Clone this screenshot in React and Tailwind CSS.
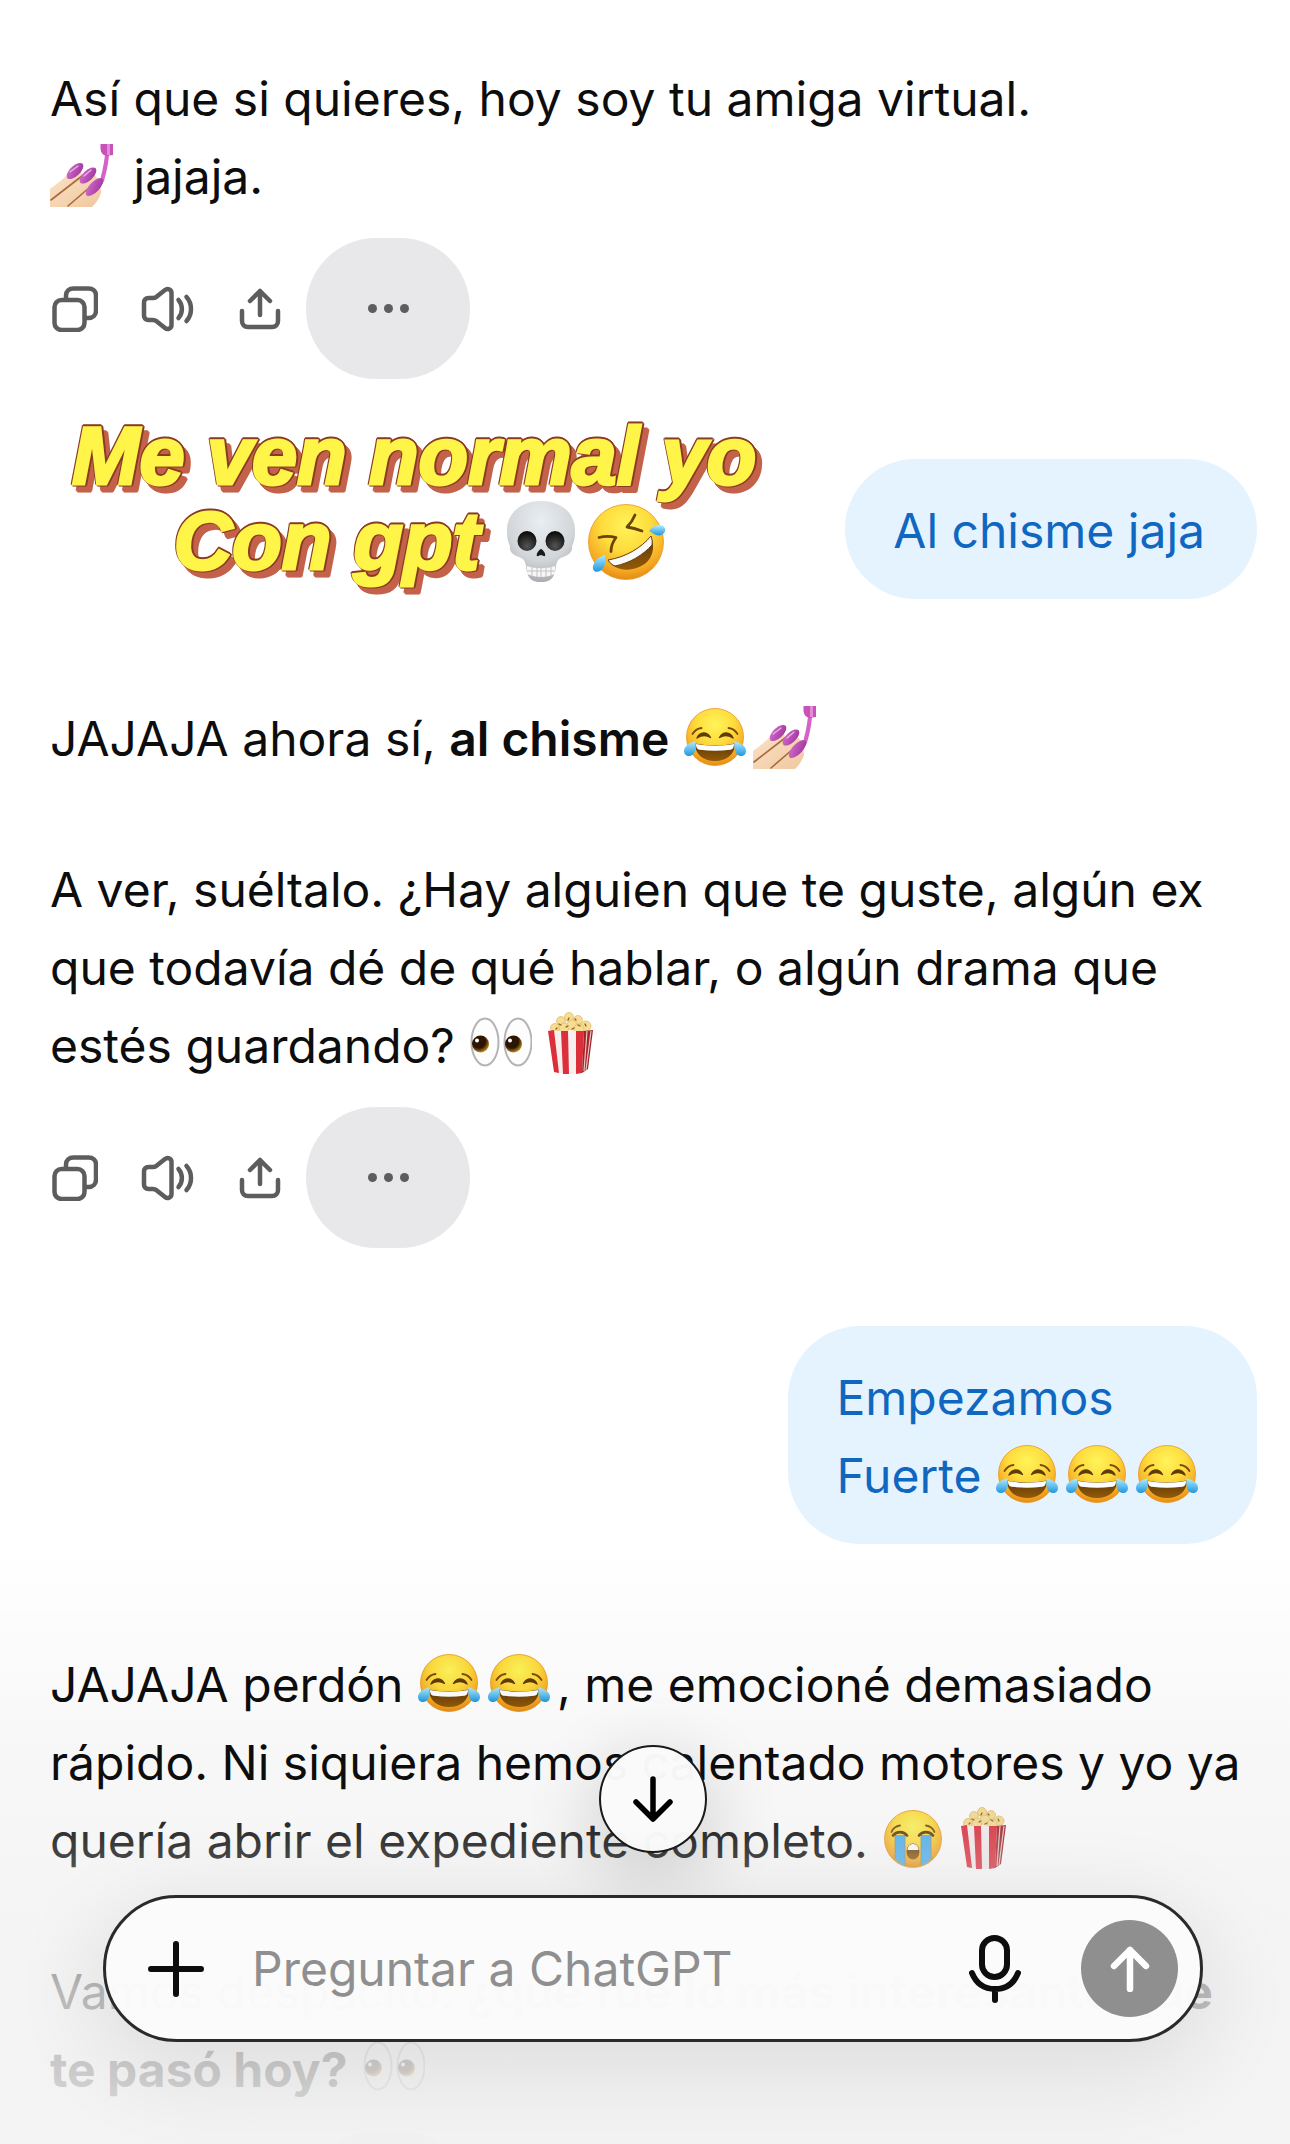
import React, { useState } from "react";

const EmojiDefs = () => (
  <svg className="absolute w-0 h-0" aria-hidden="true">
    <defs>
      <radialGradient id="face" cx="0.5" cy="0.28" r="0.75">
        <stop offset="0" stopColor="#fff45a" />
        <stop offset="0.45" stopColor="#fedb3c" />
        <stop offset="0.8" stopColor="#f6a924" />
        <stop offset="1" stopColor="#e08410" />
      </radialGradient>
      <linearGradient id="tear" x1="0" y1="0" x2="0" y2="1">
        <stop offset="0" stopColor="#aeeaff" />
        <stop offset="1" stopColor="#1f97dd" />
      </linearGradient>
      <linearGradient id="mouth" x1="0" y1="0" x2="0" y2="1">
        <stop offset="0" stopColor="#5c3806" />
        <stop offset="1" stopColor="#935a08" />
      </linearGradient>
      <linearGradient id="skin" x1="0" y1="0" x2="1" y2="1">
        <stop offset="0" stopColor="#fbe3c8" />
        <stop offset="1" stopColor="#f0c79e" />
      </linearGradient>
      <linearGradient id="nail" x1="0" y1="0" x2="1" y2="1">
        <stop offset="0" stopColor="#d56fd0" />
        <stop offset="1" stopColor="#9c3298" />
      </linearGradient>
      <radialGradient id="iris" cx="0.4" cy="0.35" r="0.65">
        <stop offset="0.6" stopColor="#2c1503" />
        <stop offset="1" stopColor="#b98a1c" />
      </radialGradient>
      <radialGradient id="bone" cx="0.5" cy="0.25" r="0.8">
        <stop offset="0" stopColor="#e9eef2" />
        <stop offset="0.6" stopColor="#d3d6d9" />
        <stop offset="1" stopColor="#a3a5a8" />
      </radialGradient>
      <radialGradient id="socket" cx="0.5" cy="0.75" r="0.7">
        <stop offset="0" stopColor="#555" />
        <stop offset="1" stopColor="#0b0b0b" />
      </radialGradient>
    </defs>
  </svg>
);

const Emoji = ({ label, children }) => (
  <svg
    role="img"
    aria-label={label}
    viewBox="0 0 64 64"
    className="inline-block w-[64px] h-[64px] mr-[6px] align-[-13px]"
  >
    {children}
  </svg>
);

const Joy = () => (
  <Emoji label="😂">
    <circle cx="32" cy="32" r="28.5" fill="url(#face)" stroke="#e8951f" strokeWidth="0.8" />
    <path d="M9.5 29c2-3.500 5-5.500 9-6M54.500 29c-2-3.500-5-5.500-9-6" fill="none" stroke="#7a4b08" strokeWidth="1.800" strokeLinecap="round" />
    <path d="M14 33c3-6.500 10-6.500 13.500-.5-4-2.500-9-2.500-13.500.5zM50 33c-3-6.500-10-6.500-13.500-.5 4-2.500 9-2.500 13.500.5z" fill="#5f3b08" stroke="#5f3b08" strokeWidth="1.400" strokeLinejoin="round" />
    <path d="M12 38.500c12 2.500 28 2.500 40 0 0 10.500-8 17.500-20 17.500s-20-7-20-17.500z" fill="url(#mouth)" />
    <path d="M13 39c12 2.300 26 2.300 38 0 0 4-1.500 5.500-4 5.800-10 1.200-20 1.200-30 0-2.500-.3-4-1.800-4-5.800z" fill="#fff" />
    <path d="M12.500 36.500C8 37 1 40.500 1 46c0 3 2.200 5 5 5 5.500 0 7.500-7 6.500-14.500z" fill="url(#tear)" />
    <path d="M51.500 36.500C56 37 63 40.500 63 46c0 3-2.200 5-5 5-5.500 0-7.500-7-6.500-14.500z" fill="url(#tear)" />
  </Emoji>
);

const Sob = () => (
  <Emoji label="😭">
    <circle cx="32" cy="32" r="28.500" fill="url(#face)" stroke="#e8951f" strokeWidth="0.8" />
    <path d="M14 28h10v31c-4-1.500-7-4-10-7zM40 28h10v24c-3 3-6 5.500-10 7z" fill="#4db1f2" />
    <path d="M14 28v24M24 28v31M40 28v31M50 28v24" stroke="#8d8f6a" strokeWidth="0.800" />
    <path d="M10.500 25c1.500-3.500 4.500-6 8.500-6.500M53.500 25c-1.500-3.500-4.500-6-8.500-6.500" fill="none" stroke="#7a4b08" strokeWidth="1.800" strokeLinecap="round" />
    <path d="M12 28.500c3.500-4.500 10.500-4.500 14 0M38 28.500c3.500-4.500 10.500-4.500 14 0" fill="none" stroke="#5f3b08" strokeWidth="2.800" strokeLinecap="round" />
    <ellipse cx="32" cy="44.500" rx="6.500" ry="8" fill="url(#mouth)" />
    <path d="M26.500 43c0-8 11-8 11 0z" fill="#fff" />
  </Emoji>
);

const NailPolish = () => (
  <Emoji label="💅🏻">
    <path d="M0 46c5-4 11-8 17-14l13-5 4 8 9-4 7 6 1 13c-2 6-5 10-9 14H0z" fill="url(#skin)" />
    <path d="M1 57l31-24M18 63l22-19" stroke="#a8693c" strokeWidth="1.600" strokeLinecap="round" />
    <path d="M55 12h4c-1 11-3 19-5 26-2 5-7 7-8 5 3-4 5-7 5-10 2-7 3-14 4-21z" fill="#d562c6" />
    <ellipse cx="25" cy="28" rx="10.500" ry="5" transform="rotate(-43 25 28)" fill="url(#nail)" />
    <ellipse cx="38" cy="32.500" rx="10.500" ry="5" transform="rotate(-43 38 32.500)" fill="url(#nail)" />
    <ellipse cx="44.500" cy="44" rx="11.500" ry="5" transform="rotate(-47 44.500 44)" fill="url(#nail)" />
    <path d="M50.500 1H63v11l-7 1c-3-1-5-3-5.500-7z" fill="#c852b8" />
    <path d="M57 1h3v11h-3z" fill="#e38ad8" />
    <path d="M20 29l8-6M34 33l7-6" stroke="#edb4ea" strokeWidth="1.200" strokeLinecap="round" />
  </Emoji>
);

const Eyes = () => (
  <Emoji label="👀">
    <ellipse cx="17" cy="30" rx="13.500" ry="23.500" fill="#fdfdfd" stroke="#b3b3b8" strokeWidth="2" />
    <ellipse cx="50" cy="30" rx="13.500" ry="23.500" fill="#fdfdfd" stroke="#b3b3b8" strokeWidth="2" />
    <circle cx="12.500" cy="32" r="8.500" fill="url(#iris)" />
    <circle cx="45.500" cy="32" r="8.500" fill="url(#iris)" />
    <circle cx="9" cy="28.500" r="2" fill="#fff" />
    <circle cx="42" cy="28.500" r="2" fill="#fff" />
  </Emoji>
);

const Popcorn = () => (
  <Emoji label="🍿">
    <g fill="#f6dd94" stroke="#dfb960" strokeWidth="0.700">
      <circle cx="17" cy="16" r="4.500" />
      <circle cx="23" cy="9" r="4.500" />
      <circle cx="31" cy="5" r="4.500" />
      <circle cx="40" cy="8" r="4.500" />
      <circle cx="48" cy="14" r="5" />
      <circle cx="26" cy="16" r="5" />
      <circle cx="34" cy="13" r="5" />
      <circle cx="41" cy="17" r="5" />
    </g>
    <path d="M21 12l2 1M30 8l1-2M37 7l1 1M28 15l2-1M40 13l2 1M18 17l1-1M34 17l2-1M47 12l1 2" stroke="#8b5c1a" strokeWidth="1.300" strokeLinecap="round" />
    <path d="M10 19h36l-1 42-10 1-18-1z" fill="#f7eeee" />
    <path d="M10 19l6-1 5 43-5-1zM23 19h7l1 43h-6zM38 19h8l-2 42-6 1z" fill="#dc2f3c" />
    <path d="M46 19l9-1-5 39-6 4z" fill="#a3232b" />
    <path d="M49 19l-3 40M53 19l-5 39" stroke="#e8c9c4" strokeWidth="1.200" />
  </Emoji>
);

const Skull = () => (
  <svg role="img" aria-label="💀" viewBox="0 0 70 84" className="w-[70px] h-[84px]">
    <path d="M35 1C15 1 1 13 1 30c0 8 1 12 3 16-1 6 3 9 9 11 5 2 6 4 7 9 1 8 2 16 15 16s14-8 15-16c1-5 2-7 7-9 6-2 10-5 9-11 2-4 3-8 3-16C69 13 55 1 35 1z" fill="url(#bone)" />
    <ellipse cx="21" cy="41" rx="9.500" ry="10" fill="url(#socket)" />
    <ellipse cx="49" cy="41" rx="9.500" ry="10" fill="url(#socket)" />
    <path d="M35 49c-3 1-5 6-4 7 1 .6 3-1 4-1s3 1.600 4 1c1-1-1-6-4-7z" fill="#1b1b1b" />
    <path d="M21 66c9 3 19 3 28 0v8c-9 4-19 4-28 0z" fill="#f7f7f7" />
    <path d="M21 71h28M26 67v9M31 68v9M35 68v9M40 68v9M45 67v9" stroke="#c2c2c2" strokeWidth="1" />
  </svg>
);

const Rofl = () => (
  <svg role="img" aria-label="🤣" viewBox="0 0 80 80" className="w-[80px] h-[80px]">
    <circle cx="39" cy="40" r="37.500" fill="url(#face)" stroke="#e8951f" strokeWidth="0.800" />
    <path d="M12 35.500c6-1.500 11-1.500 17 0-3 4-5 8-5 14M48 13c-2 5-5 9-8 12 5 .6 10 2 15 4" fill="none" stroke="#6b4208" strokeWidth="2.800" strokeLinejoin="round" strokeLinecap="round" />
    <path d="M21 58c18-3 33-12 43-24 5 13 1 26-12 31-12 5-25 3-31-7z" fill="url(#mouth)" />
    <path d="M21 58c18-3 33-12 43-24 1 3 1.500 6 1 9-9 10-22 18-37 21-3-1-5-3-7-6z" fill="#fafafa" stroke="#6b4208" strokeWidth="1" />
    <path d="M62 29c4-6 10-7 14-5 4 3 2 8-2 9-4 2-8-2-12-4z" fill="url(#tear)" />
    <path d="M18 53c-7 2-11 7-12 11-1 5 3 7 7 5 5-3 6-9 5-16z" fill="url(#tear)" />
  </svg>
);

const CopyIcon = () => (
  <svg viewBox="0 0 46 46" className="w-[46px] h-[46px]" fill="none" stroke="currentColor" strokeWidth="4.500" strokeLinejoin="round">
    <rect x="2.500" y="14" width="30" height="30" rx="7" />
    <path d="M14 14V9.500C14 5 17 2.500 21.500 2.500h15c4.500 0 7.500 2.500 7.500 7v15c0 4.500-3 7.500-7.500 7.500H32.500" />
  </svg>
);

const SpeakerIcon = () => (
  <svg viewBox="0 0 54 46" className="w-[54px] h-[46px]" fill="none" stroke="currentColor" strokeWidth="4.500" strokeLinecap="round" strokeLinejoin="round">
    <path d="M4 16.500c0-2.500 1.500-4.500 4.500-4.500H13c1.500 0 2.500-.5 3.500-1.200L25 4c2.500-2 6.500-.8 6.500 3v32c0 3.800-4 5-6.500 3l-8.500-6.800c-1-.7-2-1.200-3.500-1.200H8.500C5.500 34 4 32 4 29.500z" />
    <path d="M38.500 14c4.500 5 4.500 13 0 18M46.500 11c6 6.500 6 17.500 0 24" />
  </svg>
);

const ShareIcon = () => (
  <svg viewBox="0 0 42 42" className="w-[42px] h-[42px]" fill="none" stroke="currentColor" strokeWidth="4.500" strokeLinecap="round" strokeLinejoin="round">
    <path d="M21 27V3M11 13L21 3l10 10M3 23v10c0 3.500 2.500 6 6 6h24c3.500 0 6-2.500 6-6V23" />
  </svg>
);

const Actions = () => (
  <div className="mt-[22px] flex h-[141px] items-center text-[#5d5d5d]">
    <button type="button" aria-label="Copiar" className="ml-[2px]">
      <CopyIcon />
    </button>
    <button type="button" aria-label="Escuchar" className="ml-[42px]">
      <SpeakerIcon />
    </button>
    <button type="button" aria-label="Compartir" className="ml-[45px]">
      <ShareIcon />
    </button>
    <button
      type="button"
      aria-label="Más opciones"
      className="ml-[25px] flex h-[141px] w-[164px] items-center justify-center gap-[7px] rounded-[70px] bg-[#e8e8ea]"
    >
      <span className="h-[9px] w-[9px] rounded-full bg-[#5d5d5d]"></span>
      <span className="h-[9px] w-[9px] rounded-full bg-[#5d5d5d]"></span>
      <span className="h-[9px] w-[9px] rounded-full bg-[#5d5d5d]"></span>
    </button>
  </div>
);

const Bubble = ({ children, className = "" }) => (
  <div className={`rounded-[72px] bg-[#e5f3ff] pt-[33px] pr-[52px] pb-[29px] pl-[48px] text-[#0f67bf] ${className}`}>
    {children}
  </div>
);

// yellow sticker lettering: thin brown outline, then a solid red offset shadow
const StickerText = ({ children, className = "" }) => (
  <span
    className={`[-webkit-text-stroke:3px_#fff548] [filter:drop-shadow(1px_1px_0_#8a3b22)_drop-shadow(-1px_-1px_0_#8a3b22)_drop-shadow(1px_-1px_0_#8a3b22)_drop-shadow(5px_6px_0_#c4614a)] ${className}`}
  >
    {children}
  </span>
);

const App = () => {
  const [message, setMessage] = useState("");

  return (
    <div className="relative h-screen overflow-hidden bg-white font-['Inter',sans-serif] text-[48px] leading-[78px] text-[#0d0d0d]">
      <EmojiDefs />
      <main className="pt-[60px] pr-[33px] pl-[50px] whitespace-nowrap">
        <p>
          Así que si quieres, hoy soy tu amiga virtual.
          <br />
          <NailPolish /> jajaja.
        </p>
        <Actions />

        <div className="mt-[35px] flex items-start justify-between">
          <h1 className="ml-[22px] flex flex-col items-center font-['Liberation_Sans',sans-serif] text-[81px] leading-[85px] font-bold text-[#fff548] italic">
            <StickerText>Me ven normal yo</StickerText>
            <span className="flex h-[85px] items-center gap-[11px] pl-[12px]">
              <StickerText className="mr-[15px]">Con gpt</StickerText>
              <Skull />
              <Rofl />
            </span>
          </h1>
          <Bubble className="mt-[45px]">Al chisme jaja</Bubble>
        </div>

        <p className="mt-[101px]">
          JAJAJA ahora sí, <strong className="font-semibold">al chisme</strong> <Joy />
          <NailPolish />
        </p>
        <p className="mt-[73px]">
          A ver, suéltalo. ¿Hay alguien que te guste, algún ex
          <br />
          que todavía dé de qué hablar, o algún drama que
          <br />
          estés guardando? <Eyes />
          <Popcorn />
        </p>
        <Actions />

        <div className="mt-[78px] flex justify-end">
          <Bubble>
            Empezamos
            <br />
            Fuerte <Joy />
            <Joy />
            <Joy />
          </Bubble>
        </div>

        <p className="mt-[102px]">
          JAJAJA perdón <Joy />
          <Joy />, me emocioné demasiado
          <br />
          rápido. Ni siquiera hemos calentado motores y yo ya
          <br />
          quería abrir el expediente completo. <Sob />
          <Popcorn />
        </p>
        <p className="mt-[73px]">
          Vamos despacito:{" "}
          <strong className="font-bold">
            ¿qué fue lo más interesante que
            <br />
            te pasó hoy?
          </strong>{" "}
          <Eyes />
        </p>
        <Actions />
      </main>

      {/* composer floats over the conversation, which fades out behind it */}
      <footer className="absolute inset-x-0 bottom-0 flex flex-col items-center bg-[linear-gradient(to_bottom,rgba(243,243,243,0)_40%,rgba(243,243,243,0.2)_50%,rgba(243,243,243,0.75)_74%,rgba(243,243,243,0.83)_88%,rgba(243,243,243,0.92)_100%),linear-gradient(to_bottom,rgba(0,0,0,0)_0%,rgba(0,0,0,0.03)_35%,rgba(0,0,0,0.04)_100%)] pt-[200px] pr-[87px] pb-[102px] pl-[103px]">
        <button
          type="button"
          aria-label="Ir al final"
          className="flex h-[108px] w-[108px] items-center justify-center rounded-full border-2 border-[#1a1a1a] bg-[#fafafa]/98 text-black shadow-[0_20px_70px_10px_rgba(0,0,0,0.14)]"
        >
          <svg viewBox="0 0 40 46" className="h-[46px] w-[40px]" fill="none" stroke="currentColor" strokeWidth="5.500" strokeLinecap="round" strokeLinejoin="round">
            <path d="M20 3v40M3 26l17 17 17-17" />
          </svg>
        </button>
        <form
          onSubmit={(e) => e.preventDefault()}
          className="mt-[42px] flex h-[147px] w-full items-center rounded-full border-[3px] border-[#2a2a2a] bg-[#fbfbfb]/97 pr-[22px] pl-[42px] text-[#0d0d0d] shadow-[0_20px_90px_10px_rgba(0,0,0,0.09)]"
        >
          <button type="button" aria-label="Adjuntar">
            <svg viewBox="0 0 56 56" className="h-[56px] w-[56px]" fill="none" stroke="currentColor" strokeWidth="6" strokeLinecap="round">
              <path d="M28 3v50M3 28h50" />
            </svg>
          </button>
          <input
            type="text"
            aria-label="Preguntar a ChatGPT"
            value={message}
            onChange={(e) => setMessage(e.target.value)}
            placeholder="Preguntar a ChatGPT"
            className="ml-[48px] h-[78px] min-w-0 flex-1 bg-transparent placeholder-[#8f8f8f] outline-none"
          />
          <button type="button" aria-label="Dictar">
            <svg viewBox="0 0 54 68" className="h-[68px] w-[54px]" fill="none" stroke="currentColor" strokeWidth="6" strokeLinecap="round">
              <rect x="14" y="3" width="25" height="39" rx="12.500" />
              <path d="M4 38c4 10 12 16 23 16s19-6 23-16M27 54v11" />
            </svg>
          </button>
          <button
            type="submit"
            aria-label="Enviar"
            className="ml-[59px] flex h-[97px] w-[97px] items-center justify-center rounded-full bg-[#8f8f8f] text-white"
          >
            <svg viewBox="0 0 40 46" className="h-[46px] w-[40px]" fill="none" stroke="currentColor" strokeWidth="6.500" strokeLinecap="round" strokeLinejoin="round">
              <path d="M20 43V4M4 20L20 4l16 16" />
            </svg>
          </button>
        </form>
      </footer>
    </div>
  );
};

export default App;
